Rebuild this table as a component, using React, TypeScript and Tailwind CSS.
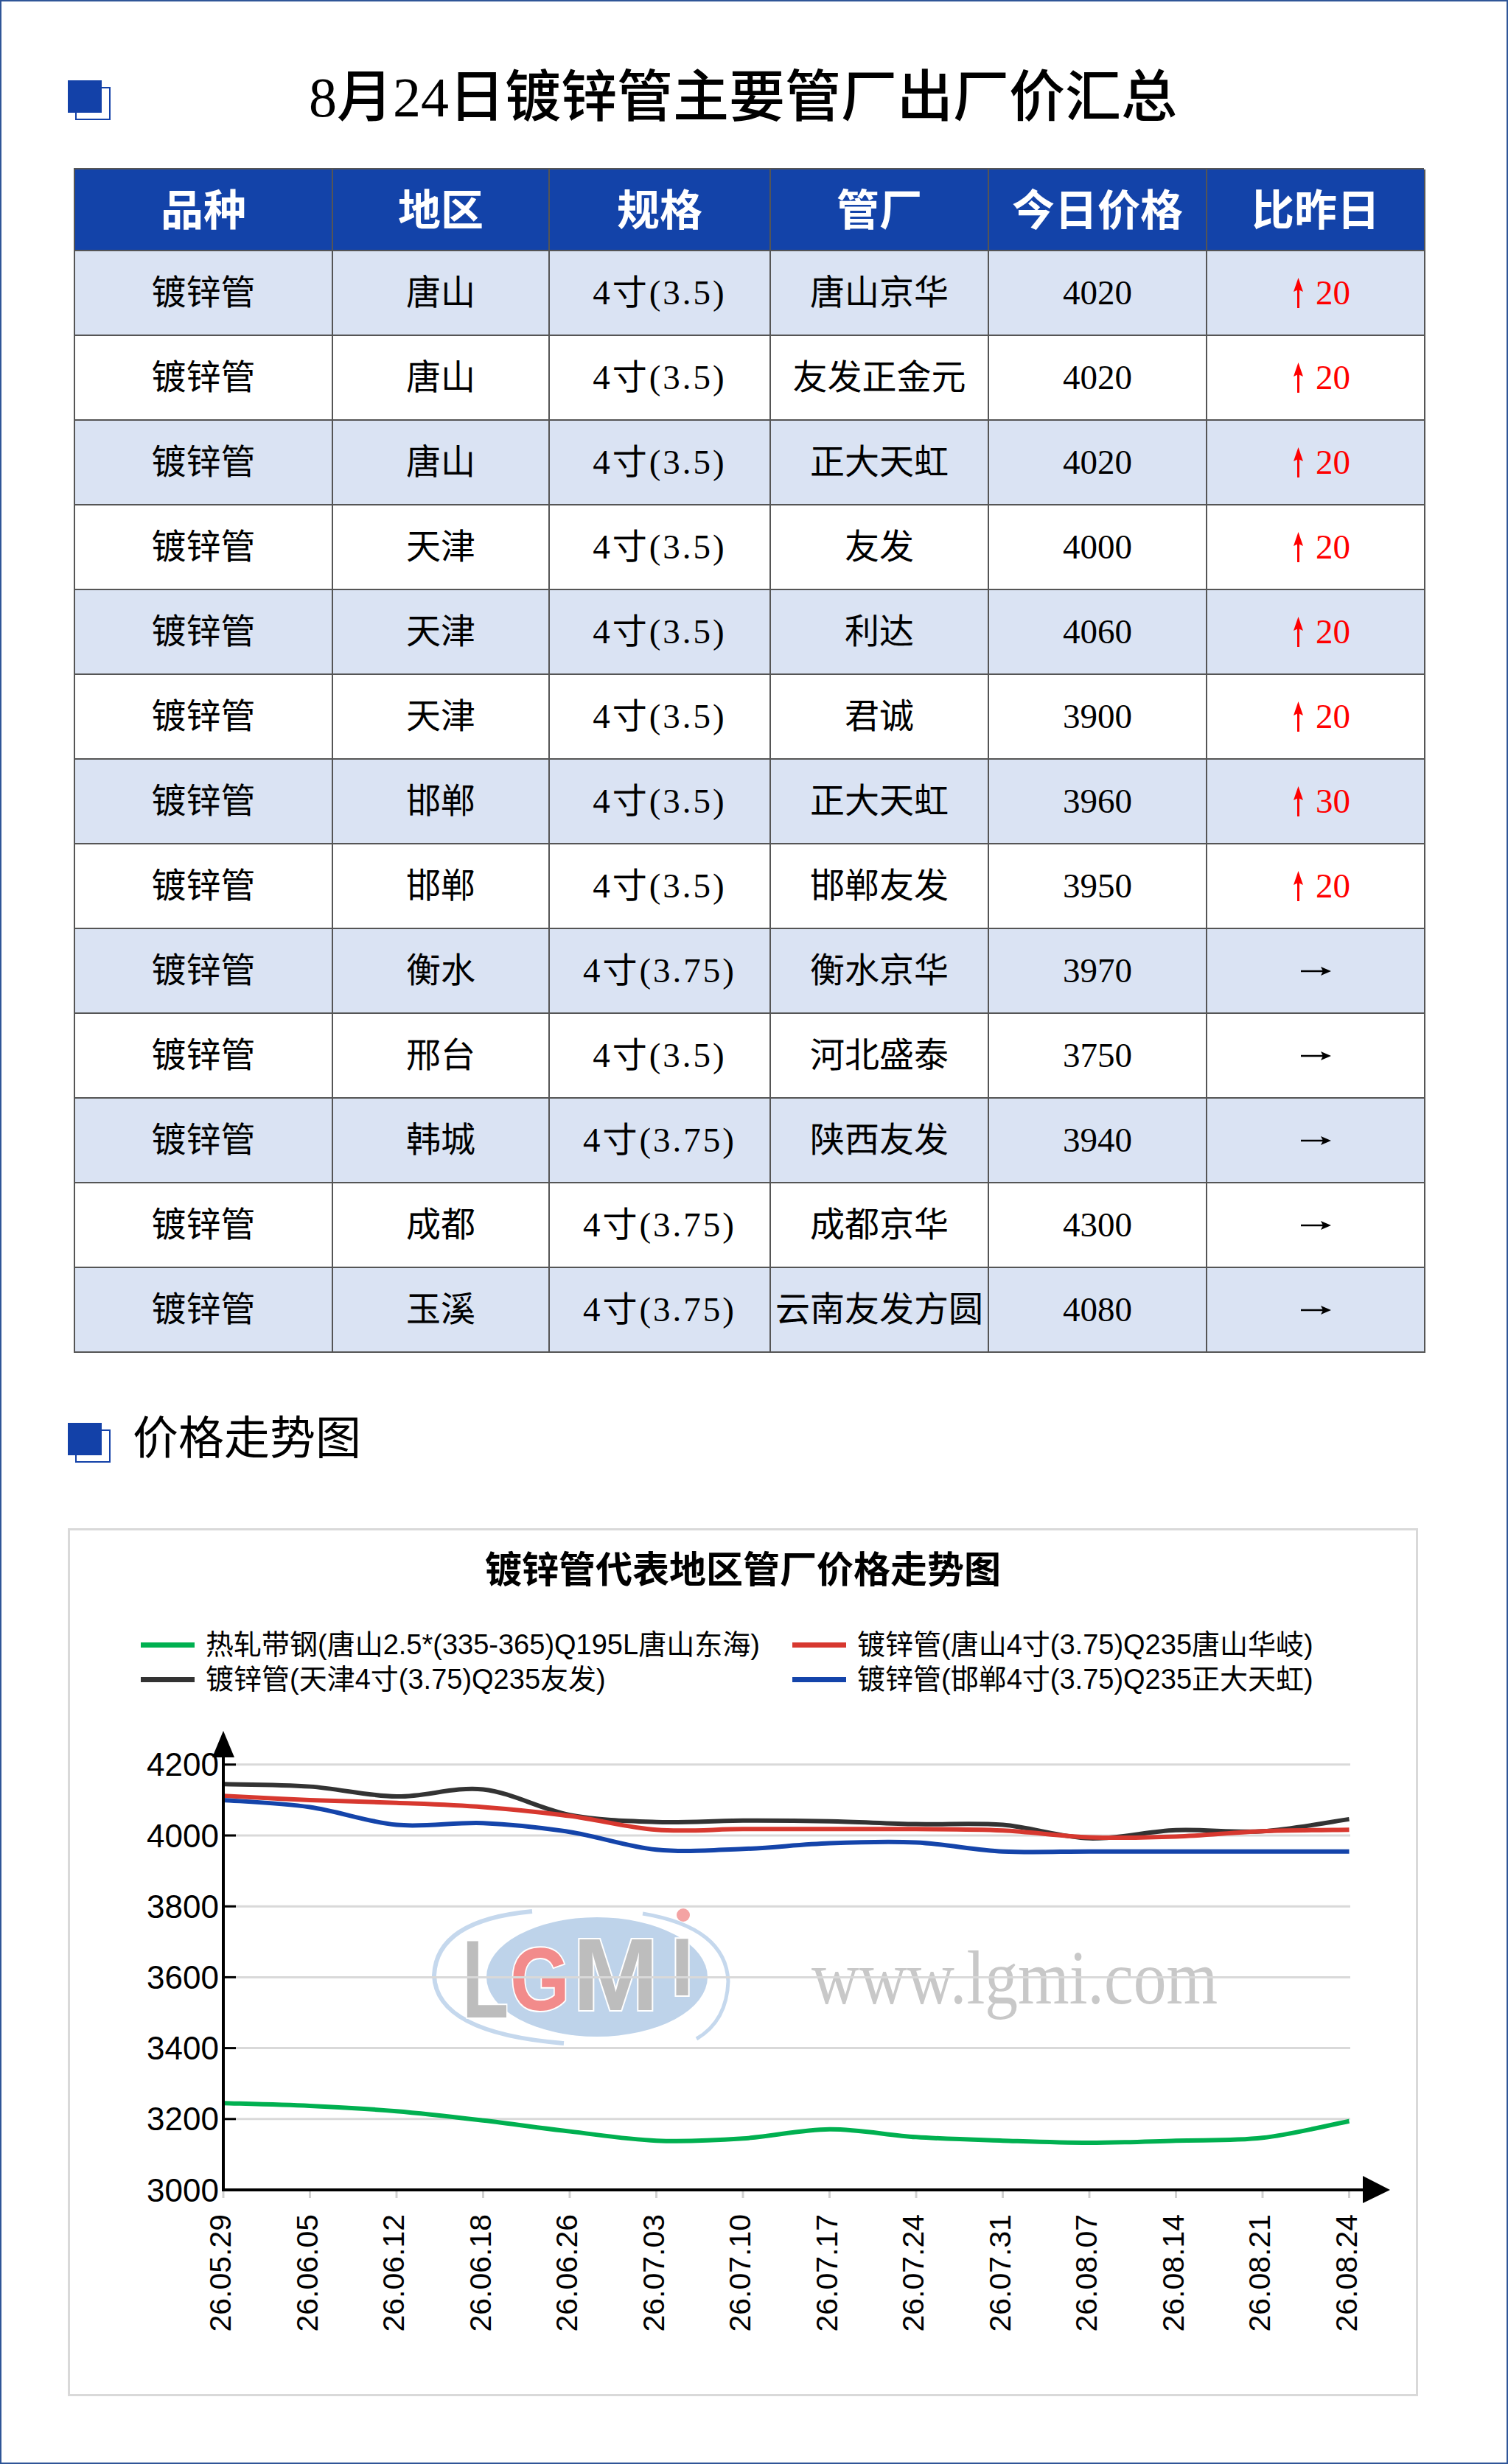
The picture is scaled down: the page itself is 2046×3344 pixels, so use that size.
import React from "react";

const serif = '"Liberation Serif", "Noto Sans CJK SC", serif';
const sans = '"Liberation Sans", "Noto Sans CJK SC", sans-serif';

type Row = { kind: string; area: string; spec: string; mill: string; price: string; diff: string | null };

const rows: Row[] = [
  { kind: "镀锌管", area: "唐山", spec: "4寸(3.5)", mill: "唐山京华", price: "4020", diff: "20" },
  { kind: "镀锌管", area: "唐山", spec: "4寸(3.5)", mill: "友发正金元", price: "4020", diff: "20" },
  { kind: "镀锌管", area: "唐山", spec: "4寸(3.5)", mill: "正大天虹", price: "4020", diff: "20" },
  { kind: "镀锌管", area: "天津", spec: "4寸(3.5)", mill: "友发", price: "4000", diff: "20" },
  { kind: "镀锌管", area: "天津", spec: "4寸(3.5)", mill: "利达", price: "4060", diff: "20" },
  { kind: "镀锌管", area: "天津", spec: "4寸(3.5)", mill: "君诚", price: "3900", diff: "20" },
  { kind: "镀锌管", area: "邯郸", spec: "4寸(3.5)", mill: "正大天虹", price: "3960", diff: "30" },
  { kind: "镀锌管", area: "邯郸", spec: "4寸(3.5)", mill: "邯郸友发", price: "3950", diff: "20" },
  { kind: "镀锌管", area: "衡水", spec: "4寸(3.75)", mill: "衡水京华", price: "3970", diff: null },
  { kind: "镀锌管", area: "邢台", spec: "4寸(3.5)", mill: "河北盛泰", price: "3750", diff: null },
  { kind: "镀锌管", area: "韩城", spec: "4寸(3.75)", mill: "陕西友发", price: "3940", diff: null },
  { kind: "镀锌管", area: "成都", spec: "4寸(3.75)", mill: "成都京华", price: "4300", diff: null },
  { kind: "镀锌管", area: "玉溪", spec: "4寸(3.75)", mill: "云南友发方圆", price: "4080", diff: null },
];

const headers = ["品种", "地区", "规格", "管厂", "今日价格", "比昨日"];

function SquareIcon({ className }: { className?: string }) {
  return (
    <div className={"relative w-[58px] h-[54px] shrink-0 " + (className ?? "")}>
      <div className="absolute left-[10px] top-[9px] w-[48px] h-[45px] border-2 border-[#1341a8]" />
      <div className="absolute left-0 top-0 w-[46px] h-[44px] bg-[#1341a8]" />
    </div>
  );
}

function UpArrow() {
  return (
    <svg width="47" height="47" viewBox="0 0 47 47" className="shrink-0">
      <line x1="23.5" y1="16" x2="23.5" y2="44" stroke="#ff0000" strokeWidth="3" />
      <polygon points="23.5,3 17,22 23.5,19 30,22" fill="#ff0000" />
    </svg>
  );
}

function RightArrow() {
  return (
    <svg width="47" height="20" viewBox="0 0 47 20">
      <line x1="3" y1="10" x2="36" y2="10" stroke="#000" strokeWidth="2.5" />
      <polygon points="44,10 30,4 33,10 30,16" fill="#000" />
    </svg>
  );
}

const dates = [
  "26.05.29", "26.06.05", "26.06.12", "26.06.18", "26.06.26", "26.07.03", "26.07.10",
  "26.07.17", "26.07.24", "26.07.31", "26.08.07", "26.08.14", "26.08.21", "26.08.24",
];

const series = [
  { color: "#333333", data: [4145, 4138, 4110, 4130, 4058, 4038, 4042, 4040, 4032, 4030, 3992, 4015, 4012, 4046] },
  { color: "#d7382f", data: [4112, 4100, 4092, 4080, 4055, 4016, 4018, 4018, 4018, 4014, 3995, 3997, 4012, 4016] },
  { color: "#1444aa", data: [4100, 4080, 4030, 4035, 4010, 3960, 3962, 3978, 3980, 3955, 3955, 3955, 3955, 3955] },
  { color: "#00b050", data: [3245, 3237, 3222, 3196, 3165, 3139, 3145, 3171, 3149, 3139, 3133, 3139, 3147, 3194] },
];

const X0 = 303;
const DX = 117.5;
const xOf = (i: number) => X0 + i * DX;
const yOf = (v: number) => 2971 - (v - 3000) * 0.481;

function smoothPath(vals: number[]) {
  const pts = vals.map((v, i) => [xOf(i), yOf(v)]);
  let d = `M ${pts[0][0]} ${pts[0][1]}`;
  for (let i = 0; i < pts.length - 1; i++) {
    const p0 = pts[i - 1] ?? pts[i];
    const p1 = pts[i];
    const p2 = pts[i + 1];
    const p3 = pts[i + 2] ?? p2;
    const c1x = p1[0] + (p2[0] - p0[0]) / 6;
    const c1y = p1[1] + (p2[1] - p0[1]) / 6;
    const c2x = p2[0] - (p3[0] - p1[0]) / 6;
    const c2y = p2[1] - (p3[1] - p1[1]) / 6;
    d += ` C ${c1x} ${c1y} ${c2x} ${c2y} ${p2[0]} ${p2[1]}`;
  }
  return d;
}

function Chart() {
  const gridVals = [4200, 4000, 3800, 3600, 3400, 3200];
  const labelVals = [4200, 4000, 3800, 3600, 3400, 3200, 3000];
  return (
    <svg className="block w-[1826px] h-[946px]" viewBox="95 2302 1826 946">
      {/* watermark */}
      <g>
        <ellipse cx="810" cy="2682" rx="150" ry="81" fill="#bed3ea" />
        <path d="M 722 2593 Q 592 2605 589 2680 Q 592 2758 765 2772" fill="none" stroke="#c5d8ed" strokeWidth="6" />
        <path d="M 872 2596 Q 985 2615 988 2688 Q 986 2742 945 2766" fill="none" stroke="#c5d8ed" strokeWidth="5" />
        <g fontFamily='"Liberation Sans", sans-serif' fontWeight="bold" stroke="#ffffff" strokeWidth="4" style={{ paintOrder: "stroke" }}>
          <text transform="translate(627,2737) scale(0.69,1)" fontSize="150" fill="#bdbdbd">L</text>
          <text transform="translate(692,2727) scale(0.86,1)" fontSize="121" fill="#f28b8b">G</text>
          <text transform="translate(777,2727)" fontSize="140" fill="#bdbdbd">M</text>
          <text transform="translate(910,2707)" fontSize="112" fill="#bdbdbd">I</text>
        </g>
        <circle cx="927" cy="2598" r="9" fill="#f4a3a3" />
        <text x="1101" y="2718" fontSize="104" fontFamily='"Liberation Serif", serif' fill="#c8c8c8" textLength="551" lengthAdjust="spacingAndGlyphs">
          www.lgmi.com
        </text>
      </g>
      {/* grid */}
      {gridVals.map((v) => (
        <line key={v} x1="305" x2="1832" y1={yOf(v)} y2={yOf(v)} stroke="#d9d9d9" strokeWidth="3" />
      ))}
      {/* y ticks & labels */}
      {labelVals.map((v) => (
        <g key={v}>
          <line x1="303" x2="320" y1={yOf(v)} y2={yOf(v)} stroke="#000" strokeWidth="3" />
          <text x="297" y={yOf(v)} textAnchor="end" dominantBaseline="central" fontSize="44" fontFamily={sans} fill="#000">
            {v}
          </text>
        </g>
      ))}
      {/* x ticks & labels */}
      {dates.map((d, i) => (
        <g key={d}>
          <line x1={xOf(i)} x2={xOf(i)} y1="2973" y2="2982" stroke="#d0d0d0" strokeWidth="3" />
          <text
            transform={`translate(${xOf(i) - 4},3004) rotate(-90)`}
            textAnchor="end"
            dominantBaseline="central"
            fontSize="41"
            fontFamily={sans}
            fill="#000"
          >
            {d}
          </text>
        </g>
      ))}
      {/* series */}
      {series.map((s) => (
        <path key={s.color} d={smoothPath(s.data)} fill="none" stroke={s.color} strokeWidth="6" strokeLinejoin="round" />
      ))}
      {/* axes */}
      <line x1="303" x2="303" y1="2380" y2="2973" stroke="#000" strokeWidth="4" />
      <polygon points="303,2348 288,2384 318,2384" fill="#000" />
      <line x1="301" x2="1852" y1="2971" y2="2971" stroke="#000" strokeWidth="4" />
      <polygon points="1886,2971 1849,2952 1849,2989" fill="#000" />
    </svg>
  );
}

function LegendItem({ color, label }: { color: string; label: string }) {
  return (
    <div className="flex items-center h-[47px]">
      <div className="w-[73px] h-[7px] shrink-0" style={{ backgroundColor: color }} />
      <span className="ml-[15px] text-[38px] leading-[47px] whitespace-nowrap text-black">{label}</span>
    </div>
  );
}

export default function App() {
  return (
    <div className="w-[2046px] h-[3344px] border-2 border-[#2f5597] bg-white text-black overflow-hidden" style={{ fontFamily: serif }}>
      {/* Title */}
      <div className="flex items-start pt-[92px]">
        <SquareIcon className="ml-[90px] mt-[15px]" />
        <h1 className="ml-[269px] text-[76px] leading-[76px] font-medium whitespace-nowrap">8月24日镀锌管主要管厂出厂价汇总</h1>
      </div>

      {/* Table */}
      <div className="ml-[98px] mt-[58px] w-[1832px] grid grid-cols-[350px_294px_300px_296px_296px_296px] border-l-2 border-t-2 border-[#555555]">
        {headers.map((h) => (
          <div
            key={h}
            className="h-[111px] flex items-center justify-center bg-[#1343a9] text-white font-bold text-[58px] leading-none border-r-2 border-b-2 border-[#555555] pt-[4px]"
          >
            {h}
          </div>
        ))}
        {rows.map((r, i) => {
          const bg = i % 2 === 0 ? "bg-[#dae3f3]" : "bg-white";
          const cell = `h-[115px] flex items-center justify-center text-[47px] leading-none border-r-2 border-b-2 border-[#555555] whitespace-nowrap ${bg}`;
          return (
            <React.Fragment key={i}>
              <div className={cell}>{r.kind}</div>
              <div className={cell}>{r.area}</div>
              <div className={cell + " tracking-[3px]"}>{r.spec}</div>
              <div className={cell}>{r.mill}</div>
              <div className={cell}>{r.price}</div>
              <div className={cell}>
                {r.diff ? (
                  <span className="flex items-center text-[#ff0000]">
                    <UpArrow />
                    <span className="w-[47px]">{r.diff}</span>
                  </span>
                ) : (
                  <RightArrow />
                )}
              </div>
            </React.Fragment>
          );
        })}
      </div>

      {/* Section heading */}
      <div className="flex items-start mt-[86px]">
        <SquareIcon className="ml-[90px] mt-[9px]" />
        <h2 className="ml-[30px] text-[62px] leading-[62px] whitespace-nowrap">价格走势图</h2>
      </div>

      {/* Chart box */}
      <div className="ml-[90px] mt-[89px] w-[1832px] h-[1178px] border-[3px] border-[#d9d9d9] bg-white" style={{ fontFamily: sans }}>
        <div className="pt-[29px] text-center text-[50px] leading-[50px] font-bold whitespace-nowrap">镀锌管代表地区管厂价格走势图</div>
        <div className="mt-[53px] pl-[96px] grid grid-cols-[884px_1fr]">
          <LegendItem color="#00b050" label="热轧带钢(唐山2.5*(335-365)Q195L唐山东海)" />
          <LegendItem color="#d7382f" label="镀锌管(唐山4寸(3.75)Q235唐山华岐)" />
          <LegendItem color="#333333" label="镀锌管(天津4寸(3.75)Q235友发)" />
          <LegendItem color="#1444aa" label="镀锌管(邯郸4寸(3.75)Q235正大天虹)" />
        </div>
        <Chart />
      </div>
    </div>
  );
}
